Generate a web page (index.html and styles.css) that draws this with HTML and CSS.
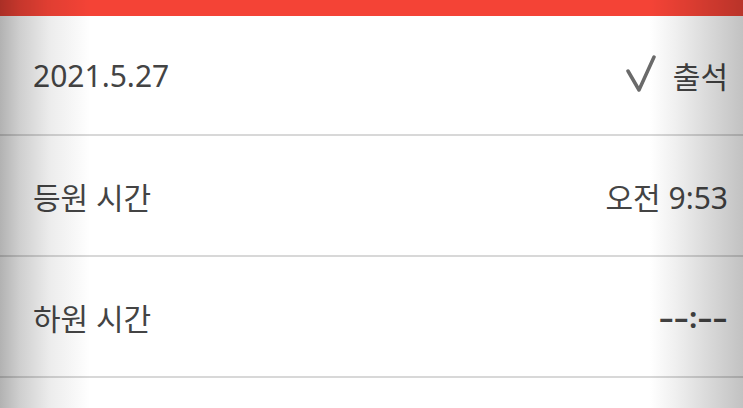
FILE: index.html
```html
<!DOCTYPE html>
<html lang="ko">

<head>
    <title>출석 정보</title>
    <meta charset="UTF-8">
    <link rel="stylesheet" href="styles.css">
</head>

<body>
    <div class="top-bar"></div>

    <div class="list">
        <div class="row">
            <span class="label">2021.5.27</span>
            <span class="value">
                <svg class="check" width="30" height="38" viewBox="0 0 30 38">
                    <path d="M2 16 L13 35 L28 2" fill="none" stroke="#6a6a6a" stroke-width="3.5" stroke-linecap="round" stroke-linejoin="round" />
                </svg>
                출석
            </span>
        </div>
        <div class="row">
            <span class="label">등원 시간</span>
            <span class="value">오전 9:53</span>
        </div>
        <div class="row">
            <span class="label">하원 시간</span>
            <span class="value empty">––:––</span>
        </div>
    </div>

    <div class="shade"></div>
</body>

</html>
```

FILE: styles.css
```css
body {
    margin: 0;
    width: 743px;
    height: 408px;
    overflow: hidden;
    background-color: #fff;
    font-family: "Noto Sans", "Noto Sans CJK KR", sans-serif;
    color: #444;
}

.top-bar {
    height: 16px;
    background-color: #f44336;
}

.list {
    display: flex;
    flex-direction: column;
}

.row {
    height: 119px;
    border-bottom: 2px solid #d8d8d8;
    display: flex;
    align-items: center;
    justify-content: space-between;
    padding: 0 15px 0 33px;
    font-size: 30px;
}

.row:first-child {
    height: 118px;
}

.value {
    display: flex;
    align-items: center;
}

.check {
    margin-right: 17px;
    margin-top: -2px;
}

.empty {
    font-size: 28px;
    font-weight: bold;
    letter-spacing: 1px;
}

/* darker edges on both sides of the screen */
.shade {
    position: fixed;
    inset: 0;
    pointer-events: none;
    mix-blend-mode: multiply;
    background: linear-gradient(to right, #b2b2b2 0, #cfcfcf 20px, #ececec 50px, #fff 90px, #fff 650px, #f0f0f0 675px, #d8d8d8 710px, #c2c2c2 100%);
}
```
